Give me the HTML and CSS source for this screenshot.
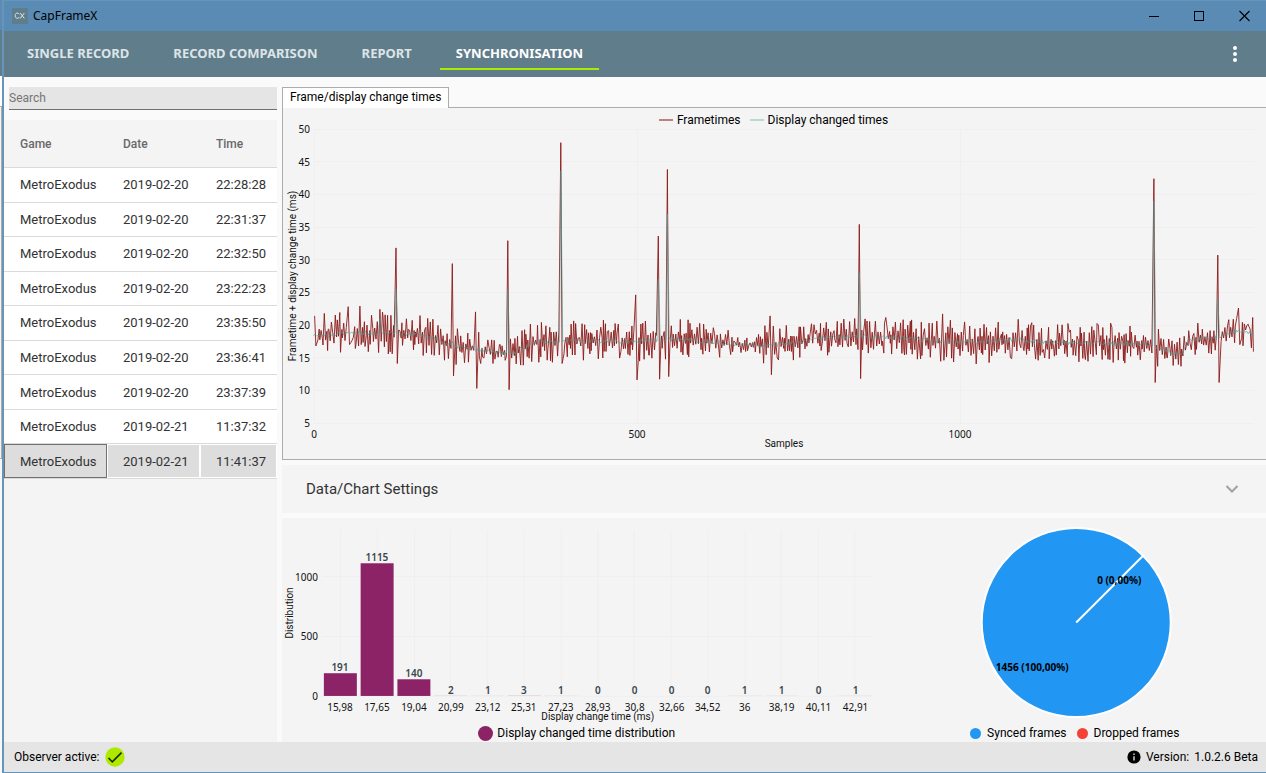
FILE: index.html
```html
<!DOCTYPE html>
<html lang="en">
<head>
<meta charset="utf-8">
<title>CapFrameX</title>
<link rel="stylesheet" href="styles.css">
</head>
<body>
<div class="backdrop" aria-hidden="true">
  <div class="backdrop-title"></div>
  <div class="backdrop-nav"></div>
  <div class="backdrop-body"></div>
  <div class="backdrop-panel"></div>
  <div class="backdrop-foot"></div>
</div>
<div class="app">
  <header class="titlebar">
    <svg class="logo" width="16" height="16" viewBox="0 0 16 16" aria-hidden="true">
      <rect width="16" height="16" fill="#607d8b"/>
      <path d="M7.3 6.2C6.7 5.4 6 5.1 5.3 5.1C4 5.1 3.2 6.2 3.2 7.7C3.2 9.3 4 10.3 5.3 10.3C6.2 10.3 6.9 9.9 7.3 9.1M8.2 5L12.3 10.4M12.3 5L8.2 10.4" fill="none" stroke="#e8eef0" stroke-width="0.9"/>
    </svg>
    <span class="app-name">CapFrameX</span>
    <div class="window-buttons">
      <button type="button" aria-label="Minimize"><svg width="12" height="12" viewBox="0 0 12 12"><path d="M1 6.5H11" stroke="#000"/></svg></button>
      <button type="button" aria-label="Maximize"><svg width="12" height="12" viewBox="0 0 12 12"><rect x="1.5" y="1.5" width="9" height="9" fill="none" stroke="#000"/></svg></button>
      <button type="button" aria-label="Close"><svg width="12" height="12" viewBox="0 0 12 12"><path d="M1.5 1L11.5 11M11.5 1L1.5 11" stroke="#000" stroke-width="1.1"/></svg></button>
    </div>
  </header>

  <nav class="nav">
    <a href="#single">SINGLE RECORD</a>
    <a href="#comparison">RECORD COMPARISON</a>
    <a href="#report">REPORT</a>
    <a href="#sync" class="active" aria-current="page">SYNCHRONISATION</a>
    <button type="button" class="more" aria-label="More options">
      <svg width="6" height="18" viewBox="0 0 6 18"><g fill="#fff"><circle cx="3" cy="3" r="2"/><circle cx="3" cy="9" r="2"/><circle cx="3" cy="15" r="2"/></g></svg>
    </button>
  </nav>

  <main class="main">
    <aside class="sidebar">
      <input class="search" type="text" placeholder="Search" aria-label="Search">
      <div class="records">
        <table>
          <thead><tr><th class="col-game">Game</th><th class="col-date">Date</th><th>Time</th></tr></thead>
          <tbody>
            <tr><td>MetroExodus</td><td>2019-02-20</td><td>22:28:28</td></tr>
            <tr><td>MetroExodus</td><td>2019-02-20</td><td>22:31:37</td></tr>
            <tr><td>MetroExodus</td><td>2019-02-20</td><td>22:32:50</td></tr>
            <tr><td>MetroExodus</td><td>2019-02-20</td><td>23:22:23</td></tr>
            <tr><td>MetroExodus</td><td>2019-02-20</td><td>23:35:50</td></tr>
            <tr><td>MetroExodus</td><td>2019-02-20</td><td>23:36:41</td></tr>
            <tr><td>MetroExodus</td><td>2019-02-20</td><td>23:37:39</td></tr>
            <tr><td>MetroExodus</td><td>2019-02-21</td><td>11:37:32</td></tr>
            <tr class="selected"><td class="focused">MetroExodus</td><td>2019-02-21</td><td>11:41:37</td></tr>
          </tbody>
        </table>
      </div>
    </aside>

    <div class="content">
      <div class="tabs" role="tablist">
        <button type="button" class="tab" role="tab" aria-selected="true">Frame/display change times</button>
      </div>
      <section class="panel frametimes">
        <div class="legend">
          <span class="key"><i class="line red"></i>Frametimes</span>
          <span class="key"><i class="line teal"></i>Display changed times</span>
        </div>
        <div class="plot" id="frame-chart"></div>
      </section>

      <button type="button" class="settings" aria-expanded="false">
        Data/Chart Settings
        <svg width="14" height="10" viewBox="0 0 14 10" aria-hidden="true"><path d="M1.5 2L7 7.5L12.5 2" fill="none" stroke="#a0a0a0" stroke-width="2"/></svg>
      </button>

      <section class="bottom">
        <div class="panel distribution">
          <div class="plot" id="bar-chart"></div>
          <div class="legend"><span class="key"><i class="dot large purple"></i>Display changed time distribution</span></div>
        </div>
        <div class="panel sync">
          <div class="plot" id="pie-chart"></div>
          <div class="legend">
            <span class="key"><i class="dot blue"></i>Synced frames</span>
            <span class="key"><i class="dot orange"></i>Dropped frames</span>
          </div>
        </div>
      </section>
    </div>
  </main>

  <footer class="status">
    <span>Observer active:</span>
    <svg width="20" height="20" viewBox="0 0 20 20" aria-hidden="true"><circle cx="10" cy="10" r="9.7" fill="#aeea00"/><path d="M3.5 11L7.3 14.8L16.5 5.6" fill="none" stroke="#1c2a00" stroke-width="1.6"/></svg>
    <span class="version">
      <svg width="14" height="14" viewBox="0 0 14 14" aria-hidden="true"><circle cx="7" cy="7" r="6.6" fill="#000"/><path d="M7 6.2V10.5M7 3.5V5" stroke="#eee" stroke-width="1.3"/></svg>
      <span>Version:</span>
      <span>1.0.2.6 Beta</span>
    </span>
  </footer>
</div>
<script src="charts.js"></script>
</body>
</html>
```
FILE: styles.css
```css
* { box-sizing: border-box; }

body {
  margin: 0;
  display: flex;
  height: 100vh;
  overflow: hidden;
  font-family: Roboto, "Liberation Sans", sans-serif;
  font-size: 12px;
  line-height: 16px;
  color: #1a1a1a;
}

button {
  margin: 0;
  border: 0;
  background: none;
  font: inherit;
  color: inherit;
}

svg { display: block; flex: none; }

.backdrop {
  display: flex;
  flex-direction: column;
  width: 2px;
  background: #fafafa;
}
.backdrop-title { height: 30px; background: #598bb4; }
.backdrop-nav { height: 46px; background: #607d8b; }
.backdrop-body { height: 30px; background: #fff; }
.backdrop-panel {
  height: 353px;
  background: #f4f4f4;
  border: 1px solid #acacac;
  border-left: 0;
}
.backdrop-foot { flex: 1; background: #f8f8f8; }

.app {
  flex: 1;
  min-width: 0;
  display: flex;
  flex-direction: column;
  border-left: 2px solid #6795b9;
  border-bottom: 1px solid #6795b9;
  background: #fafafa;
}

.titlebar {
  display: flex;
  align-items: center;
  height: 31px;
  padding-left: 8px;
  border-top: 1px solid #6795b9;
  background: #598bb4;
  color: #000;
}
.app-name {
  margin-left: 5px;
  font-family: "Noto Sans", sans-serif;
}
.window-buttons { display: flex; margin-left: auto; }
.window-buttons button {
  display: flex;
  align-items: center;
  justify-content: center;
  width: 45px;
  height: 30px;
  padding: 0;
}

.nav {
  display: flex;
  align-items: center;
  gap: 12px;
  height: 46px;
  padding: 0 20px 0 7px;
  background: #607d8b;
}
.nav a {
  height: 32px;
  padding: 7px 16px 0;
  border-bottom: 2px solid transparent;
  font-family: "Noto Sans", sans-serif;
  font-size: 13px;
  font-weight: 700;
  color: #dde4e7;
  text-decoration: none;
  white-space: nowrap;
}
.nav .active { color: #fff; border-bottom-color: #aeea00; }
.more { margin-left: auto; padding: 0 8px; }

.main {
  flex: 1;
  min-height: 0;
  display: flex;
  gap: 5px;
  padding-top: 10px;
}

.sidebar {
  display: flex;
  flex-direction: column;
  gap: 10px;
  width: 273px;
}
.search {
  height: 23px;
  margin-left: 5px;
  padding: 0;
  border: 0;
  border-bottom: 1px solid #707070;
  outline: 0;
  border-radius: 0;
  background: #e5e5e5;
  font: inherit;
}
.search::placeholder { color: #757575; opacity: 1; }

.records { flex: 1; background: #f4f4f4; }
.records table {
  width: 100%;
  height: 359px;
  border-spacing: 0;
  table-layout: fixed;
}
.col-game { width: 103px; }
.col-date { width: 93px; }
.records th, .records td {
  padding: 0 0 0 16px;
  border-bottom: 1px solid #dadada;
  text-align: left;
}
.records th { height: 48px; font-weight: 500; color: #696969; }
.records td { padding-top: 1px; background: #fff; font-size: 13px; color: #333; }
.records .selected td {
  background: #ddd;
  box-shadow: inset 0 0 0 1px #fff;
}
.records .selected .focused { box-shadow: inset 0 0 0 1px #707070; }

.content {
  flex: 1;
  min-width: 0;
  display: grid;
  grid-template-rows: 20px minmax(0, 353fr) 53px minmax(0, 229fr);
}
.tabs { display: flex; }
.tab {
  z-index: 1;
  height: 21px;
  padding: 0 7px 2px;
  border: 1px solid #acacac;
  border-bottom: 0;
  background: #fff;
  color: #000;
}

.panel {
  display: flex;
  flex-direction: column;
  min-width: 0;
  min-height: 0;
  background: #f4f4f4;
}
.frametimes {
  padding-top: 4px;
  border: 1px solid #acacac;
  border-right: 0;
}
.plot { flex: 1; min-height: 0; }
.plot svg { width: 100%; height: 100%; overflow: visible; }

.legend {
  display: flex;
  justify-content: center;
  gap: 9px;
  height: 16px;
  padding-right: 2px;
  color: #000;
}
.key { display: flex; align-items: center; gap: 4px; white-space: nowrap; }
.line { width: 14px; height: 2px; }
.red { background: #c08080; }
.teal { background: #b9d9d5; }
.dot { width: 11px; height: 11px; border-radius: 50%; }
.dot.large { width: 15px; height: 15px; }
.purple { background: #8b2366; }
.blue { background: #2196f3; }
.orange { background: #f44336; }
.distribution .legend { padding-right: 16px; }
.sync .legend { gap: 10px; padding-right: 4px; }
.sync .key { gap: 6px; }

.settings {
  display: flex;
  align-items: center;
  justify-content: space-between;
  margin-top: 5px;
  height: 48px;
  padding: 0 27px 0 24px;
  background: #f4f4f4;
  font-size: 15px;
  color: #333;
}

.bottom {
  display: grid;
  grid-template-columns: 8fr 5fr;
  min-height: 0;
  margin-top: 5px;
  padding-bottom: 1px;
  background: #f4f4f4;
}

.status {
  display: flex;
  align-items: center;
  gap: 5px;
  height: 30px;
  padding: 0 8px 0 10px;
  background: #e5e5e5;
  color: #000;
}
.version { display: flex; align-items: center; gap: 5px; margin-left: auto; }

.tick { font: 10px "Noto Sans", sans-serif; fill: #111; }
.axis { font: 10px Roboto, sans-serif; fill: #111; text-anchor: middle; }
.value { font: 600 10px "Noto Sans", sans-serif; fill: #37474f; text-anchor: middle; }
.slice { font: bold 10px "Noto Sans", sans-serif; fill: #000; }
.mid { text-anchor: middle; }
.end { text-anchor: end; }
.grid { stroke: #efefef; fill: none; }
.bar { fill: #8b2366; }
.bar.tiny { fill-opacity: 0.3; }
.pie { fill: #2196f3; stroke: #fff; stroke-width: 2; }
.frames { fill: none; stroke: #8b1a1a; stroke-width: 0.9; }
.display { fill: none; stroke: #4f9c92; stroke-opacity: 0.6; }
```
FILE: charts.js
```js
const SAMPLES = 1455;

// [sample, average, spread]
const profile = [
  [0, 18.3, 2.2], [60, 18.8, 2.2], [165, 18.6, 2.1], [185, 18.0, 2], [210, 17.0, 1.9],
  [250, 16.4, 1.8], [280, 15.7, 1.6], [305, 15.7, 1.8], [345, 17.4, 2.2], [440, 17.6, 2.1],
  [500, 17.4, 2], [560, 17.9, 2.1], [630, 17.3, 1.7], [664, 17, 0.8], [686, 17, 0.8],
  [700, 16.9, 2.6], [745, 17.2, 1.6], [790, 18.1, 2], [880, 18.3, 1.9], [970, 17.5, 2.1],
  [1030, 17.4, 2.2], [1090, 17.8, 2], [1130, 17.3, 1.9], [1290, 17.1, 2.1], [1312, 16.4, 1.8],
  [1330, 15.4, 1.3], [1346, 15.8, 1.7], [1354, 17.8, 1.7], [1400, 18, 1.5], [1425, 19, 2.1], [1455, 18.7, 2.1]
];

// [sample, frametime peak, following frametime, display peak]
const spikes = [
  [1, 21.4, 16.8, 18.6], [53, 22.8, 17, 19], [71, 22.9, 17, 19.3], [102, 22.4, 17.5, 21],
  [127, 31.8, 14.1, 25.5], [214, 29.4, 12.2, 17.5], [250, 22, 10.3, 16], [300, 32.9, 10.1, 25.4],
  [382, 47.9, 14.1, 43.6], [498, 24.6, 11.6, 17.5], [533, 33.6, 11.7, 27], [547, 43.8, 12.1, 37],
  [706, 21.4, 12.4, 17], [844, 35.4, 11.8, 28], [973, 21.7, 14.6, 17.5],
  [1300, 42.4, 11.2, 39], [1399, 30.7, 11.2, 24], [1431, 22.6, 17, 19.2]
];

function randomizer(seed) {
  return () => {
    seed = (seed + 0x6d2b79f5) | 0;
    let t = Math.imul(seed ^ (seed >>> 15), 1 | seed);
    t = (t + Math.imul(t ^ (t >>> 7), 61 | t)) ^ t;
    return ((t ^ (t >>> 14)) >>> 0) / 4294967296;
  };
}

function profileAt(x) {
  let i = 1;
  while (i < profile.length - 1 && profile[i][0] < x) i++;
  const [x0, m0, s0] = profile[i - 1];
  const [x1, m1, s1] = profile[i];
  const t = (x - x0) / (x1 - x0);
  return [m0 + (m1 - m0) * t, s0 + (s1 - s0) * t];
}

function makeSeries() {
  const random = randomizer(2019);
  const frames = [];
  const display = [];
  const nearSpike = x => spikes.some(s => x > s[0] - 2 && x < s[0] + 4);
  let direction = 1;
  for (let x = 0; x <= SAMPLES; x += random() < 0.3 ? 1 : 2) {
    if (nearSpike(x)) continue;
    const [mean, spread] = profileAt(x);
    direction = random() < 0.88 ? -direction : direction;
    frames.push([x, mean + direction * spread * (0.15 + 1.4 * Math.pow(random(), 1.3))]);
    display.push([x, mean + (random() - 0.5) * 0.7]);
  }
  for (const [x, peak, low, shown] of spikes) {
    frames.push([x, peak], [x + 2, low]);
    display.push([x - 2, profileAt(x)[0]], [x, shown], [x + 3, profileAt(x)[0]]);
  }
  const order = (a, b) => a[0] - b[0];
  return { frames: frames.sort(order), display: display.sort(order) };
}

const series = makeSeries();

function mount(id, build) {
  const host = document.getElementById(id);
  host.innerHTML = "";
  const w = host.clientWidth;
  const h = host.clientHeight;
  host.innerHTML = `<svg viewBox="0 0 ${w} ${h}">${build(w, h)}</svg>`;
}

const text = (x, y, cls, value) => `<text x="${Math.round(x)}" y="${Math.round(y)}" class="${cls}">${value}</text>`;
const vertical = (x, y, value) => `<text transform="translate(${x} ${Math.round(y)}) rotate(-90)" class="axis">${value}</text>`;
const line = (x1, y1, x2, y2) => `<path class="grid" d="M${x1} ${y1}L${x2} ${y2}"/>`;
const snap = v => Math.floor(v) + 0.5;

function frameChart(w, h) {
  const left = 31, right = w - 12, top = 1, bottom = h - 36;
  const px = v => left + v / SAMPLES * (right - left);
  const py = v => bottom - (v - 5) / 45 * (bottom - top);
  let out = "";
  for (let v = 5; v <= 50; v += 5) {
    out += line(left, snap(py(v)), right, snap(py(v)));
    out += text(left - 4, py(v) + 4, "tick end", v);
  }
  for (const v of [0, 500, 1000]) {
    out += line(snap(px(v)), top, snap(px(v)), bottom);
    out += text(px(v), bottom + 15, "tick mid", v);
  }
  const path = points => "M" + points.map(p => px(p[0]).toFixed(1) + " " + py(p[1]).toFixed(1)).join("L");
  out += `<path class="frames" d="${path(series.frames)}"/>`;
  out += `<path class="display" d="${path(series.display)}"/>`;
  out += text((left + right) / 2, bottom + 24, "axis", "Samples");
  out += vertical(13, (top + bottom) / 2, "Frametime + display change time (ms)");
  return out;
}

const bins = [
  ["15,98", 191], ["17,65", 1115], ["19,04", 140], ["20,99", 2], ["23,12", 1],
  ["25,31", 3], ["27,23", 1], ["28,93", 0], ["30,8", 0], ["32,66", 0],
  ["34,52", 0], ["36", 1], ["38,19", 1], ["40,11", 0], ["42,91", 1]
];

function barChart(w, h) {
  const left = 40, right = w - 14, top = 12, bottom = h - 29;
  const band = (right - left) / bins.length;
  const py = v => bottom - v / 1394 * (bottom - top);
  let out = "";
  for (const v of [0, 500, 1000]) {
    out += line(left, snap(py(v)), right, snap(py(v)));
    out += text(left - 4, py(v) + 4, "tick end", v);
  }
  bins.forEach(([label, count], i) => {
    const x = left + band * (i + 0.5);
    out += line(snap(x), top, snap(x), bottom);
    out += `<rect class="bar${count < 10 ? " tiny" : ""}" x="${x - 16.5}" y="${py(count)}" width="33" height="${bottom - py(count)}"/>`;
    out += text(x, py(count) - 2, "value", count);
    out += text(x, bottom + 15, "tick mid", label);
  });
  out += text((left + right) / 2, bottom + 24, "axis", "Display change time (ms)");
  out += vertical(11, (top + bottom) / 2, "Distribution");
  return out;
}

function pieChart(w, h) {
  const cx = Math.round(w / 2) - 1, cy = h / 2 + 1, r = Math.min(w, h) / 2 - 9;
  const edge = r * Math.SQRT1_2;
  return `<circle class="pie" cx="${cx}" cy="${cy}" r="${r}"/>` +
    `<path class="pie" d="M${cx} ${cy}L${cx + edge} ${cy - edge}"/>` +
    text(cx + edge * 0.65, cy - edge * 0.58, "slice mid", "0 (0,00%)") +
    text(cx - edge * 0.66, cy + edge * 0.72, "slice mid", "1456 (100,00%)");
}

function draw() {
  mount("frame-chart", frameChart);
  mount("bar-chart", barChart);
  mount("pie-chart", pieChart);
}

draw();
window.addEventListener("resize", draw);
```
